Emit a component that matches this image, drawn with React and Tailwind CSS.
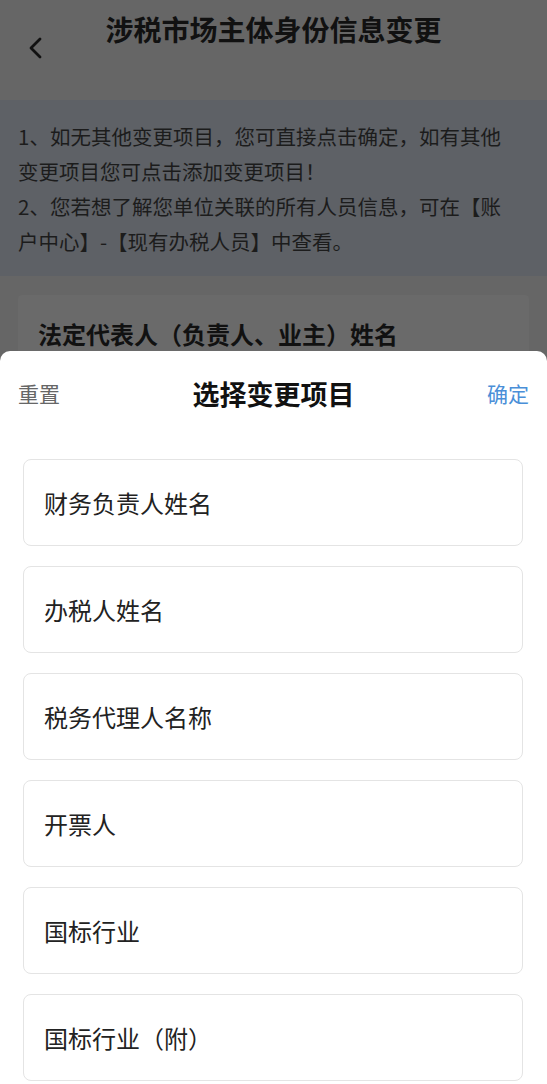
const items = ['财务负责人姓名', '办税人姓名', '税务代理人名称', '开票人', '国标行业', '国标行业（附）'];

const font = { fontFamily: '"Noto Sans CJK SC", "Noto Sans", sans-serif' };

export default function App() {
    return (
        <div className="h-[1084px] w-[547px] overflow-hidden bg-[#666666] flex flex-col" style={font}>
            {/* Page header (dimmed) */}
            <div className="relative h-[100px] shrink-0">
                <div className="absolute left-[26px] top-[36px]">
                    <svg width="20" height="24" viewBox="0 0 20 24" fill="none">
                        <path d="M14 3 L5 12 L14 21" stroke="#111" strokeWidth="2.8" strokeLinecap="round" strokeLinejoin="round" />
                    </svg>
                </div>
                <div className="pt-[10px] text-center text-[28px] leading-[38px] font-bold text-[#111]">涉税市场主体身份信息变更</div>
            </div>

            {/* Notice */}
            <div className="h-[176px] shrink-0 bg-[#5e6166] pl-[18px] pr-[36px] pt-[19px] text-[20.5px] leading-[35px] text-[#1c1c1c]">
                <p>1、如无其他变更项目，您可直接点击确定，如有其他变更项目您可点击添加变更项目！</p>
                <p>2、您若想了解您单位关联的所有人员信息，可在【账户中心】-【现有办税人员】中查看。</p>
            </div>

            {/* Form card behind the sheet */}
            <div className="h-[75px] shrink-0 overflow-hidden px-[18px] pt-[19px]">
                <div className="h-[200px] rounded-[4px] bg-[#6a6a6a] px-[20px] pt-[22px]">
                    <div className="text-[24px] leading-[34px] font-bold text-[#111]">法定代表人（负责人、业主）姓名</div>
                </div>
            </div>

            {/* Bottom sheet */}
            <div className="flex-1 rounded-t-[10px] bg-white">
                <div className="h-[86px] flex items-center justify-between px-[18px]">
                    <button className="text-[21px] text-[#666]">重置</button>
                    <div className="text-[27px] font-bold text-[#111]">选择变更项目</div>
                    <button className="text-[21px] text-[#4a8fd8]">确定</button>
                </div>
                <div className="flex flex-col gap-[20px] pt-[22px] pl-[23px] pr-[24px]">
                    {items.map(item => (
                        <div key={item} className="h-[87px] shrink-0 flex items-center rounded-[8px] border border-[#e4e4e4] pl-[20px] text-[24px] text-[#222]">
                            {item}
                        </div>
                    ))}
                </div>
            </div>
        </div>
    );
}
